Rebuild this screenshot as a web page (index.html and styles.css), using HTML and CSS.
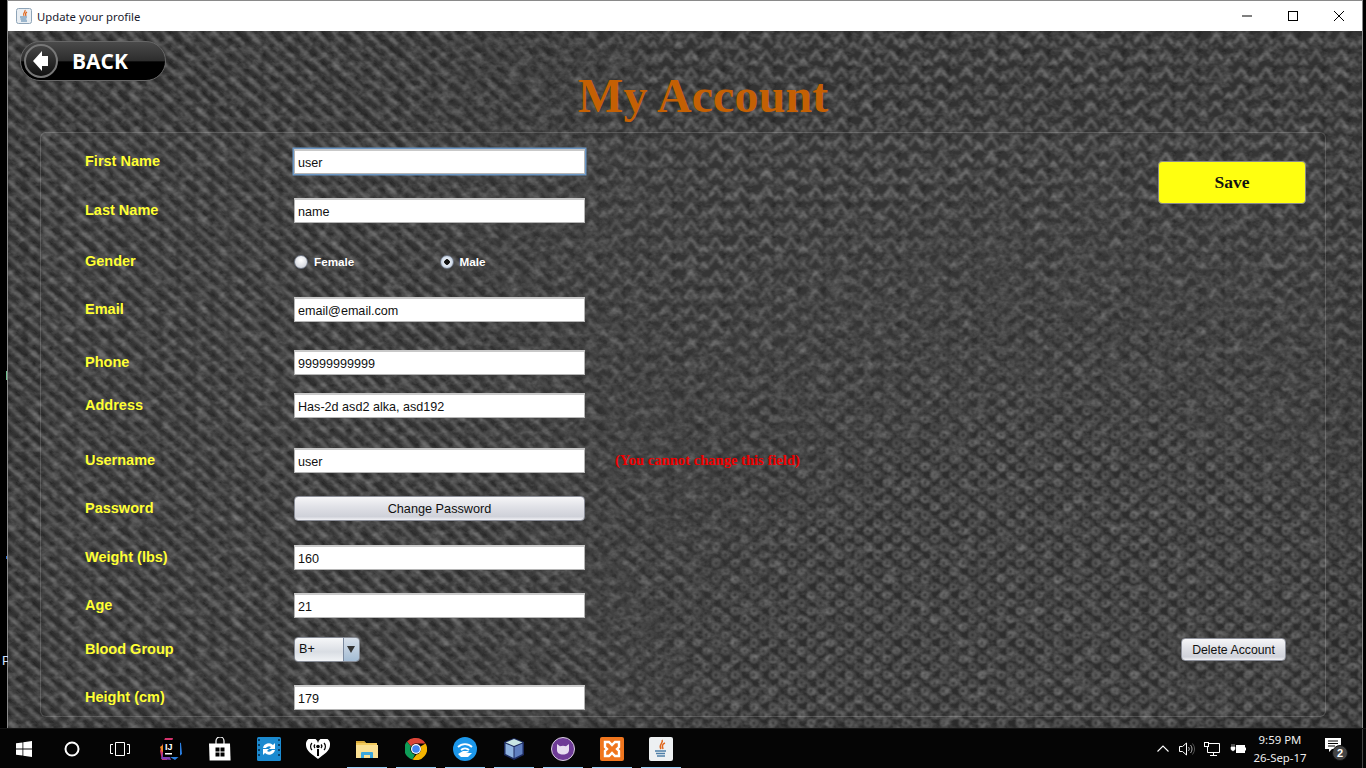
FILE: index.html
```html
<!DOCTYPE html>
<html lang="en">
<head>
    <meta charset="UTF-8">
    <title>Update your profile</title>
    <link rel="stylesheet" href="styles.css">
</head>
<body>
    <!-- bits of desktop showing left of the window -->
    <span class="desk-mark green"></span>
    <span class="desk-mark blue"></span>
    <span class="desk-letter">P</span>

    <div class="window">
        <div class="titlebar">
            <div class="title-left">
                <svg class="java-small" width="16" height="16" viewBox="0 0 16 16">
                    <rect x="0.5" y="0.5" width="15" height="15" rx="2" fill="#e9eef3" stroke="#8ea4b8"/>
                    <path d="M9 2c1 2-3 3-1 6M11 4c-2 1-2 2-1 4" fill="none" stroke="#e0661c" stroke-width="1.2"/>
                    <path d="M4 9h7M4.500 11h6M5 13h6" stroke="#4f7fa8" stroke-width="1.100"/>
                </svg>
                <span>Update your profile</span>
            </div>
            <div class="win-controls">
                <span class="win-btn"><svg width="12" height="12" viewBox="0 0 12 12"><path d="M1 6h10" stroke="#000"/></svg></span>
                <span class="win-btn"><svg width="12" height="12" viewBox="0 0 12 12"><rect x="1.500" y="1.500" width="9" height="9" fill="none" stroke="#000"/></svg></span>
                <span class="win-btn"><svg width="12" height="12" viewBox="0 0 12 12"><path d="M1 1l10 10M11 1L1 11" stroke="#000"/></svg></span>
            </div>
        </div>

        <div class="content">
            <!-- fabric background -->
            <svg class="fabric" width="1354" height="697">
                <defs>
                    <filter id="soft"><feGaussianBlur stdDeviation="0.9"/></filter>
                    <filter id="grain">
                        <feTurbulence type="fractalNoise" baseFrequency="0.09 0.13" numOctaves="3" seed="7"/>
                        <feColorMatrix values="0 0 0 0 0.75  0 0 0 0 0.75  0 0 0 0 0.75  0.500 0 0 0 -0.210"/>
                    </filter>
                    <pattern id="streaks" width="17" height="15" patternUnits="userSpaceOnUse">
                        <path d="M1 0l9 10M9.500 7.500l5 6M-6 7.500l5 6" stroke="#595959" stroke-width="3.200" stroke-linecap="round"/>
                        <path d="M7 0l9 10M-1 6l4 5" stroke="#222" stroke-width="2.200"/>
                    </pattern>
                    <pattern id="chevrons" width="25" height="17" patternUnits="userSpaceOnUse">
                        <path d="M2 12l6-9 6 9M14.500 20.500l6-9 6 9M-10.500 20.500l6-9 6 9" fill="none" stroke="#5b5b5b" stroke-width="2.600" stroke-linecap="round"/>
                        <path d="M18 0l-4 7" stroke="#262626" stroke-width="3"/>
                    </pattern>
                    <pattern id="rings" width="19" height="16" patternUnits="userSpaceOnUse">
                        <rect width="19" height="16" fill="#2c2c2c"/>
                        <circle cx="5" cy="4" r="3" fill="#2a2a2a" stroke="#666" stroke-width="1.500"/>
                        <circle cx="14.500" cy="12" r="3" fill="#2a2a2a" stroke="#5f5f5f" stroke-width="1.500"/>
                        <path d="M9 0l3 8M0 9l3 7" stroke="#444" stroke-width="2"/>
                    </pattern>
                    <radialGradient id="topFade" gradientUnits="userSpaceOnUse" cx="1000" cy="120" r="620">
                        <stop offset="0.550" stop-color="#fff"/>
                        <stop offset="1" stop-color="#000"/>
                    </radialGradient>
                    <radialGradient id="lowFade" gradientUnits="userSpaceOnUse" cx="1050" cy="760" r="620">
                        <stop offset="0.550" stop-color="#fff"/>
                        <stop offset="1" stop-color="#000"/>
                    </radialGradient>
                    <mask id="topMask"><rect width="1354" height="697" fill="url(#topFade)"/></mask>
                    <mask id="lowMask"><rect width="1354" height="697" fill="url(#lowFade)"/></mask>
                </defs>
                <rect width="1354" height="697" fill="#333"/>
                <g filter="url(#soft)">
                    <rect width="1354" height="697" fill="url(#streaks)"/>
                    <rect width="1354" height="697" fill="#333" mask="url(#topMask)"/>
                    <rect width="1354" height="697" fill="url(#chevrons)" mask="url(#topMask)"/>
                    <rect width="1354" height="697" fill="url(#rings)" mask="url(#lowMask)"/>
                </g>
                <rect width="1354" height="697" filter="url(#grain)"/>
            </svg>

            <div class="header">
                <button class="back-btn">
                    <span class="back-circle">
                        <svg width="18" height="24" viewBox="0 0 18 24"><path d="M1 12L10 2v5h6v10h-6v5z" fill="#fff"/></svg>
                    </span>
                    <span>BACK</span>
                </button>
                <h1 class="page-title">My Account</h1>
            </div>

            <div class="panel">
                <label class="field-label">First Name</label>
                <input class="text-field focused" value="user">
                <button class="save-btn">Save</button>

                <label class="field-label">Last Name</label>
                <input class="text-field" value="name">

                <label class="field-label">Gender</label>
                <div class="radio-group">
                    <span class="radio-item"><span class="radio"></span>Female</span>
                    <span class="radio-item"><span class="radio checked"></span>Male</span>
                </div>

                <label class="field-label">Email</label>
                <input class="text-field" value="email@email.com">

                <label class="field-label">Phone</label>
                <input class="text-field" value="99999999999">

                <label class="field-label">Address</label>
                <input class="text-field" value="Has-2d asd2 alka, asd192">

                <label class="field-label">Username</label>
                <input class="text-field" value="user">
                <span class="locked-note">(You cannot change this field)</span>

                <label class="field-label">Password</label>
                <button class="plain-btn wide-btn">Change Password</button>

                <label class="field-label">Weight (lbs)</label>
                <input class="text-field" value="160">

                <label class="field-label">Age</label>
                <input class="text-field" value="21">

                <label class="field-label">Blood Group</label>
                <div class="combo">
                    <span class="combo-value">B+</span>
                    <span class="combo-arrow"></span>
                </div>
                <button class="plain-btn delete-btn">Delete Account</button>

                <label class="field-label">Height (cm)</label>
                <input class="text-field" value="179">
            </div>
        </div>
    </div>

    <div class="taskbar">
        <div class="task-left">
            <span class="sys-btn">
                <svg width="16" height="16" viewBox="0 0 16 16"><path d="M0 2.300l6.500-.9v6.200H0zM7.300 1.300L16 0v7.600H7.300zM0 8.400h6.500v6.200L0 13.700zM7.300 8.400H16V16l-8.700-1.200z" fill="#fff"/></svg>
            </span>
            <span class="sys-btn">
                <svg width="16" height="16" viewBox="0 0 16 16"><circle cx="8" cy="8" r="6.500" fill="none" stroke="#fff" stroke-width="2"/></svg>
            </span>
            <span class="sys-btn">
                <svg width="20" height="14" viewBox="0 0 20 14"><path d="M5.500.5h9v13h-9zM3 2.500H.5v9H3M17 2.500h2.500v9H17" fill="none" stroke="#fff"/></svg>
            </span>

            <div class="task-apps">
                <!-- IntelliJ -->
                <span class="app">
                    <svg width="24" height="24" viewBox="0 0 24 24">
                        <path d="M1 14L6 1h8L8 23H3z" fill="#d6336c"/>
                        <path d="M2 22L6 8l6 15z" fill="#7b3fb5"/>
                        <path d="M14 3l8 3 1 11-7 6-5-3z" fill="#2a7ee0"/>
                        <path d="M1 10l4-3 2 6-4 2z" fill="#f08a24"/>
                        <rect x="4" y="3" width="17" height="17" fill="#000"/>
                        <text x="6" y="12.500" class="ij-text">IJ</text>
                        <rect x="6" y="16" width="7" height="1.500" fill="#fff"/>
                    </svg>
                </span>
                <!-- Store -->
                <span class="app">
                    <svg width="22" height="24" viewBox="0 0 22 24">
                        <path d="M7 7V4a4 4 0 0 1 8 0v3" fill="none" stroke="#fff" stroke-width="1.200"/>
                        <path d="M0 6.500h21l.6 17H.6z" fill="#fff"/>
                        <path d="M6.500 10.500h4v4h-4zM11.500 10.500h4v4h-4zM6.500 15.500h4v4h-4zM11.500 15.500h4v4h-4z" fill="#000"/>
                    </svg>
                </span>
                <!-- Video converter -->
                <span class="app">
                    <svg width="24" height="24" viewBox="0 0 24 24">
                        <rect width="24" height="24" rx="1.500" fill="#1b8ad0"/>
                        <path d="M1 2h2v2H1zM1 7h2v2H1zM1 12h2v2H1zM1 17h2v2H1zM21 2h2v2h-2zM21 7h2v2h-2zM21 12h2v2h-2zM21 17h2v2h-2z" fill="#0a3f66"/>
                        <path d="M6 11a6 6 0 0 1 10-3l2-2v6h-6l2-2a3.500 3.500 0 0 0-5 1zM18 13a6 6 0 0 1-10 3l-2 2v-6h6l-2 2a3.500 3.500 0 0 0 5-1z" fill="#fff"/>
                    </svg>
                </span>
                <!-- iHeart -->
                <span class="app">
                    <svg width="24" height="20" viewBox="0 0 24 20">
                        <path d="M12 20C6 15 0 12 0 6a6 6 0 0 1 12-2 6 6 0 0 1 12 2c0 6-6 9-12 14z" fill="#fff"/>
                        <path d="M6 11a5 5 0 0 1 0-7M18 11a5 5 0 0 0 0-7M9 9a2.500 2.500 0 0 1 0-3.500M15 9a2.500 2.500 0 0 0 0-3.500" fill="none" stroke="#000" stroke-width="1.200"/>
                        <circle cx="12" cy="7.500" r="1.800" fill="#000"/>
                        <path d="M11 10h2v7h-2z" fill="#000"/>
                    </svg>
                </span>
                <!-- Explorer -->
                <span class="app">
                    <svg width="22" height="20" viewBox="0 0 22 20">
                        <path d="M0 2h8l2 2h11v15H0z" fill="#f3cb5c"/>
                        <path d="M0 2h8l2 2H0z" fill="#d8a93a"/>
                        <path d="M0 6h22v13H0z" fill="#fbe193"/>
                        <path d="M5 17v-3a1 1 0 0 1 1-1h10a1 1 0 0 1 1 1v5h-3v-3H8v3H5z" fill="#3ca8dc"/>
                    </svg>
                </span>
                <!-- Chrome -->
                <span class="app">
                    <svg width="22" height="22" viewBox="0 0 22 22">
                        <path d="M11 0a11 11 0 0 1 9.500 5.500H11a5.500 5.500 0 0 0-5 3L2 3.500A11 11 0 0 1 11 0z" fill="#dc4437"/>
                        <path d="M2 3.500L6 8.500a5.500 5.500 0 0 0 4 8l-2.500 5A11 11 0 0 1 2 3.500z" fill="#0f9d58"/>
                        <path d="M20.500 5.500A11 11 0 0 1 7.500 21.500l4-5a5.500 5.500 0 0 0 4-8z" fill="#f4b400"/>
                        <circle cx="11" cy="11" r="5" fill="#fff"/>
                        <circle cx="11" cy="11" r="3.800" fill="#4285f4"/>
                    </svg>
                </span>
                <!-- Wifi hotspot -->
                <span class="app">
                    <svg width="24" height="24" viewBox="0 0 24 24">
                        <circle cx="12" cy="12" r="12" fill="#1c97ea"/>
                        <path d="M5 10a10 10 0 0 1 14 0M8 13a6 6 0 0 1 8 0" fill="none" stroke="#fff" stroke-width="1.800"/>
                        <path d="M5 17l5-3h5l1 1-3 1h6l-4 4H8z" fill="#fff"/>
                    </svg>
                </span>
                <!-- Box -->
                <span class="app">
                    <svg width="22" height="24" viewBox="0 0 22 24">
                        <path d="M11 1l10 4v13l-10 5-10-5V5z" fill="#1c2a5e"/>
                        <path d="M11 2l8.500 3.500L11 9 2.500 5.500z" fill="#c9e6e4"/>
                        <path d="M2.500 6.500L10.500 10v11l-8-4z" fill="#8fb3e0"/>
                        <path d="M19.500 6.500L11.500 10v11l8-4z" fill="#5f7fc0"/>
                    </svg>
                </span>
                <!-- GitHub desktop -->
                <span class="app">
                    <svg width="24" height="24" viewBox="0 0 24 24">
                        <circle cx="12" cy="12" r="11.500" fill="#6e3b96" stroke="#d8d0de"/>
                        <path d="M6 7l3 2.200a9 9 0 0 1 6 0L18 7v6c0 3-2.500 4.500-6 4.500S6 16 6 13z" fill="#e7def0"/>
                    </svg>
                </span>
                <!-- XAMPP -->
                <span class="app">
                    <svg width="24" height="24" viewBox="0 0 24 24">
                        <rect width="24" height="24" rx="2" fill="#f0761e"/>
                        <path d="M5 5h4l3 3 3-3h4v5l-2 2 2 2v5h-4l-3-3-3 3H5v-5l2-2-2-2z" fill="none" stroke="#fff" stroke-width="2.400"/>
                    </svg>
                </span>
                <!-- Java -->
                <span class="app">
                    <svg width="24" height="24" viewBox="0 0 24 24">
                        <rect width="24" height="24" rx="2" fill="#edf0f2"/>
                        <path d="M13 3c2 3-4 4-1 9M16 6c-3 1-3 3-2 6" fill="none" stroke="#e0661c" stroke-width="1.500"/>
                        <path d="M6 14h11M7 16.500h9M8 19h8" stroke="#4f7fa8" stroke-width="1.300"/>
                    </svg>
                </span>
            </div>
        </div>

        <div class="tray">
            <svg class="tray-icon" width="12" height="7" viewBox="0 0 12 7"><path d="M.5 6.500L6 1l5.500 5.500" fill="none" stroke="#fff" stroke-width="1.100"/></svg>
            <svg class="tray-icon" width="16" height="14" viewBox="0 0 16 14"><path d="M.5 4.500h3l4-3.500v12l-4-3.500h-3z" fill="none" stroke="#fff"/><path d="M9.500 5a3 3 0 0 1 0 4M11.500 3a6 6 0 0 1 0 8" fill="none" stroke="#aaa"/><path d="M13.500 1.500a9 9 0 0 1 0 11" fill="none" stroke="#555"/></svg>
            <svg class="tray-icon" width="16" height="14" viewBox="0 0 16 14"><path d="M3.500 1.500h12v9h-12zM6 13.500h7M9.500 10.500v3" fill="none" stroke="#fff"/><rect x=".5" y=".5" width="4" height="4" fill="#000" stroke="#fff"/></svg>
            <svg class="tray-icon" width="16" height="10" viewBox="0 0 16 10"><path d="M2 0v3M4 0v3M1 3h4v2.500L3 7 1 5.500z" fill="#fff" stroke="#fff" stroke-width=".6"/><rect x="6.500" y="1.500" width="8" height="7" fill="#fff" stroke="#fff"/><path d="M15.500 3.500v3" stroke="#fff"/></svg>
            <div class="clock">
                <span>9:59 PM</span>
                <span>26-Sep-17</span>
            </div>
            <div class="notif">
                <svg width="16" height="14" viewBox="0 0 16 14"><path d="M0 0h16v11H7l-3 3v-3H0z" fill="#fff"/><path d="M3 3h10M3 5.500h10M3 8h7" stroke="#000"/></svg>
                <span class="notif-badge">2</span>
            </div>
        </div>
    </div>
</body>
</html>
```

FILE: styles.css
```css
* {
    margin: 0;
    padding: 0;
    box-sizing: border-box;
}

body, html {
    width: 1366px;
    height: 768px;
    overflow: hidden;
    background-color: #000;
    font-family: 'Liberation Sans', Arial, sans-serif;
}

/* Desktop leftovers */
.desk-mark {
    position: absolute;
    left: 6px;
    width: 1px;
}

.desk-mark.green {
    top: 371px;
    height: 9px;
    background-color: #6fbf8f;
}

.desk-mark.blue {
    top: 556px;
    height: 3px;
    background-color: #2f6fd0;
}

.desk-letter {
    position: absolute;
    left: 2px;
    top: 653px;
    font-size: 13px;
    color: #cfe0ff;
}

/* Window */
.window {
    width: 1356px;
    height: 728px;
    margin-left: 7px;
    border: 1px solid #8a8a8a;
    border-bottom: none;
    display: flex;
    flex-direction: column;
}

.titlebar {
    height: 30px;
    flex-shrink: 0;
    background-color: #fff;
    display: flex;
    align-items: center;
    justify-content: space-between;
    font-family: 'Noto Sans', sans-serif;
    font-size: 11.300px;
    color: #1a1a2e;
}

.title-left {
    display: flex;
    align-items: center;
    gap: 5px;
    padding-left: 8px;
}

.win-controls {
    display: flex;
}

.win-btn {
    width: 46px;
    height: 30px;
    display: flex;
    align-items: center;
    justify-content: center;
}

.content {
    position: relative;
    flex: 1;
    overflow: hidden;
}

.fabric {
    position: absolute;
    top: 0;
    left: 0;
}

.header {
    position: relative;
    height: 101px;
    display: flex;
    padding: 10px 0 0 12px;
}

.back-btn {
    width: 146px;
    height: 40px;
    display: flex;
    align-items: center;
    gap: 14px;
    padding-left: 3px;
    border: 1px solid #666;
    border-radius: 20px;
    background: linear-gradient(#4a4a4a 0, #2c2c2c 50%, #000 52%, #000 100%);
    color: #fff;
    font-family: 'Open Sans', sans-serif;
    font-weight: 700;
    font-size: 21px;
}

.back-circle {
    width: 34px;
    height: 34px;
    border-radius: 50%;
    border: 2px solid #777;
    background: linear-gradient(#444, #111);
    display: flex;
    align-items: center;
    justify-content: center;
}

.page-title {
    margin-left: 412px;
    margin-top: 29px;
    font-family: 'Liberation Serif', 'Times New Roman', serif;
    font-size: 48px;
    line-height: 52px;
    font-weight: bold;
    letter-spacing: 0.1px;
    color: #c46004;
    white-space: nowrap;
}

/* Form panel */
.panel {
    position: relative;
    width: 1286px;
    height: 585px;
    margin-left: 32px;
    padding: 16px 19px 0 44px;
    border: 1px solid rgba(255, 255, 255, 0.16);
    border-radius: 6px;
    background-color: rgba(255, 255, 255, 0.015);
    display: grid;
    grid-template-columns: 209px 291px 1fr;
    grid-template-rows: 49px 51px 48px 53px 43px 55px 48px 49px 48px 44px 48px 25px;
    align-items: start;
}

.field-label {
    grid-column: 1;
    height: 25px;
    line-height: 25px;
    font-family: 'Liberation Sans', Arial, sans-serif;
    font-size: 14.500px;
    font-weight: bold;
    color: #ffff33;
}

.text-field {
    grid-column: 2;
    width: 291px;
    height: 25px;
    padding: 1px 3px 0;
    border: 1px solid #b5b5b5;
    border-top: 2px solid #c9c9c9;
    background-color: #fff;
    font-family: 'Liberation Sans', Arial, sans-serif;
    font-size: 12.600px;
    color: #111;
    outline: none;
}

.text-field.focused {
    box-shadow: 0 0 0 1.5px #6b96c4;
}

.radio-group {
    grid-column: 2;
    height: 25px;
    display: flex;
    align-items: center;
}

.radio-item {
    width: 147.500px;
    display: flex;
    align-items: center;
    gap: 6px;
    font-size: 11.700px;
    font-weight: bold;
    color: #fff;
}

.radio {
    width: 14px;
    height: 14px;
    border-radius: 50%;
    border: 1px solid #6f7684;
    background: radial-gradient(circle at 50% 35%, #fff, #c5c9d2);
}

.radio.checked {
    background: radial-gradient(circle, #111 0, #111 2.500px, #e8edf4 3px, #a9bdd6 100%);
}

.plain-btn {
    border: 1px solid #8c8f99;
    border-radius: 4px;
    background: linear-gradient(#f6f6f8 0, #dfe0e6 45%, #cfd1d9 85%, #f0f0f4 100%);
    font-family: 'Liberation Sans', Arial, sans-serif;
    font-size: 12.300px;
    color: #111;
}

.wide-btn {
    grid-column: 2;
    width: 291px;
    height: 25px;
    font-size: 12.700px;
}

.delete-btn {
    grid-column: 3;
    grid-row: 11;
    justify-self: end;
    width: 105px;
    height: 23px;
    margin-top: 1px;
    margin-right: 20px;
}

.save-btn {
    grid-column: 3;
    grid-row: 1 / 3;
    justify-self: end;
    width: 148px;
    height: 43px;
    margin-top: 12px;
    border: 1px solid #8a8a8a;
    border-radius: 4px;
    background-color: #ffff10;
    font-family: 'Liberation Serif', 'Times New Roman', serif;
    font-size: 17.500px;
    font-weight: bold;
    color: #111;
}

.locked-note {
    grid-column: 3;
    margin-left: 30px;
    line-height: 25px;
    font-family: 'Liberation Serif', 'Times New Roman', serif;
    font-size: 14.600px;
    font-weight: bold;
    color: #f00000;
    white-space: nowrap;
}

.combo {
    grid-column: 2;
    width: 66px;
    height: 25px;
    display: flex;
    border: 1px solid #858a94;
    border-radius: 4px;
    overflow: hidden;
    font-size: 12.600px;
    color: #111;
}

.combo-value {
    flex: 1;
    padding-left: 4px;
    line-height: 23px;
    background: linear-gradient(#f6f7f9, #d9dde3 60%, #f0f2f5);
}

.combo-arrow {
    width: 16px;
    position: relative;
    border-left: 1px solid #7c8aa0;
    background: linear-gradient(#d8e0ea, #a3bbd3);
}

.combo-arrow::after {
    content: "";
    position: absolute;
    top: 8px;
    left: 3px;
    border-left: 4px solid transparent;
    border-right: 4px solid transparent;
    border-top: 7px solid #333;
}

/* Taskbar */
.taskbar {
    height: 40px;
    display: flex;
    justify-content: space-between;
    background-color: #050505;
    border-top: 1px solid #141414;
}

.task-left {
    display: flex;
}

.sys-btn {
    width: 48px;
    height: 39px;
    display: flex;
    align-items: center;
    justify-content: center;
}

.task-apps {
    display: flex;
    margin-left: 2px;
}

.app {
    width: 49px;
    height: 39px;
    display: flex;
    align-items: center;
    justify-content: center;
    position: relative;
}

/* running apps get the blue strip */
.app:nth-child(n+5)::after {
    content: "";
    position: absolute;
    bottom: -1px;
    left: 5px;
    right: 4px;
    height: 2px;
    background-color: #9ad2f7;
}

.ij-text {
    font-family: 'Liberation Sans', Arial, sans-serif;
    font-size: 9px;
    font-weight: bold;
    fill: #fff;
}

.tray {
    display: flex;
    align-items: center;
    width: 210px;
    padding-left: 4px;
    border-right: 1px solid #444;
    margin-right: 3px;
}

.tray-icon {
    margin-right: 9.500px;
    flex-shrink: 0;
}

.clock {
    width: 52px;
    margin-left: -1px;
    display: flex;
    flex-direction: column;
    align-items: center;
    gap: 3px;
    font-family: 'Noto Sans', sans-serif;
    font-size: 11.400px;
    line-height: 15px;
    color: #eee;
    white-space: nowrap;
}

.notif {
    position: relative;
    margin-left: 19px;
    margin-top: -3px;
}

.notif-badge {
    position: absolute;
    top: 7px;
    left: 7px;
    width: 16px;
    height: 16px;
    border-radius: 50%;
    background-color: #444;
    border: 1px solid #111;
    font-size: 11px;
    font-weight: bold;
    line-height: 14px;
    text-align: center;
    color: #fff;
}
```
